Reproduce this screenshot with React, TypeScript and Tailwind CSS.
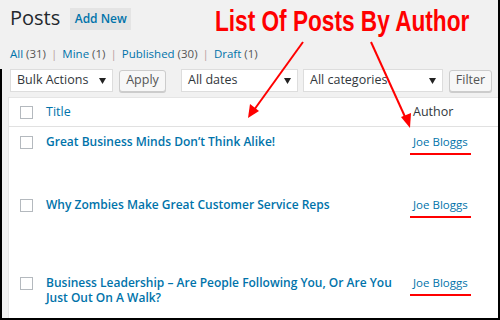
import React from 'react';

interface Post {
  id: number;
  title: string;
  author: string;
  rowHeight: string;
}

const posts: Post[] = [
  { id: 1, title: "Great Business Minds Don’t Think Alike!", author: 'Joe Bloggs', rowHeight: 'h-[63px]' },
  { id: 2, title: 'Why Zombies Make Great Customer Service Reps', author: 'Joe Bloggs', rowHeight: 'h-[78px]' },
  { id: 3, title: 'Business Leadership – Are People Following You, Or Are You Just Out On A Walk?', author: 'Joe Bloggs', rowHeight: 'h-[60px]' },
];

const Caret = () => (
  <svg width="7" height="6" viewBox="0 0 7 6" className="shrink-0">
    <path d="M0 0 L7 0 L3.5 6 Z" fill="#222" />
  </svg>
);

const Select = ({ label, width }: { label: string; width: string }) => (
  <div className={`${width} h-[23px] bg-white border border-[#ddd] flex items-center justify-between pl-[6px] pr-[6px] text-[12.5px] text-[#32373c]`}>
    <span>{label}</span>
    <Caret />
  </div>
);

const Button = ({ label, width }: { label: string; width: string }) => (
  <button className={`${width} h-[22px] bg-[#f7f7f7] border border-[#ccc] rounded-[3px] text-[12.5px] text-[#555] shadow-[0_1px_0_#ccc] flex items-center justify-center`}>
    {label}
  </button>
);

const Checkbox = () => (
  <div className="w-[13px] h-[13px] bg-white border border-[#b4b9be] shrink-0" />
);

const App: React.FC = () => {
  return (
    <div className="relative w-[500px] h-[320px] bg-[#f1f1f1] overflow-hidden border-r-2 border-b-2 border-black font-['Open_Sans',sans-serif]">
      {/* Header */}
      <div className="flex items-start pl-[10px] pt-[4px]">
        <h1 className="text-[20px] leading-[28px] text-[#23282d]">Posts</h1>
        <button className="ml-[10px] mt-[4px] h-[22px] w-[61px] bg-[#e4e4e4] text-[12px] font-semibold text-[#0073aa] flex items-center justify-center">
          Add New
        </button>
      </div>

      {/* Status links */}
      <div className="mt-[13px] pl-[10px] h-[18px] text-[11.5px] leading-[18px] text-[#555] flex items-center">
        <span className="text-[#0073aa]">All</span>&nbsp;(31)
        <span className="text-[#b9a0a0] mx-[5px]">|</span>
        <span className="text-[#0073aa]">Mine</span>&nbsp;(1)
        <span className="text-[#b9a0a0] mx-[5px]">|</span>
        <span className="text-[#0073aa]">Published</span>&nbsp;(30)
        <span className="text-[#b9a0a0] mx-[5px]">|</span>
        <span className="text-[#0073aa]">Draft</span>&nbsp;(1)
      </div>

      <div className="border-l-2 border-black mt-[6px]">
        {/* Filters */}
        <div className="flex items-center pl-[8px] h-[23px]">
          <Select label="Bulk Actions" width="w-[103px]" />
          <div className="ml-[6px]"><Button label="Apply" width="w-[47px]" /></div>
          <div className="ml-[15px]"><Select label="All dates" width="w-[117px]" /></div>
          <div className="ml-[5px]"><Select label="All categories" width="w-[140px]" /></div>
          <div className="ml-[6px]"><Button label="Filter" width="w-[43px]" /></div>
        </div>

        {/* Table */}
        <div className="ml-[6px] mt-[5px] bg-white border-t border-l border-[#e5e5e5]">
          <div className="flex items-center h-[29px] border-b border-[#e1e1e1]">
            <div className="w-[37px] pl-[11px]"><Checkbox /></div>
            <div className="w-[367px] text-[12.5px] text-[#0073aa]">Title</div>
            <div className="text-[12.5px] text-[#32373c]">Author</div>
          </div>
          {posts.map(post => (
            <div key={post.id} className={`flex items-start ${post.rowHeight}`}>
              <div className="w-[37px] pl-[11px] pt-[9px]"><Checkbox /></div>
              <div className="w-[367px] pt-[7px] pr-[12px] text-[12px] leading-[15px] font-semibold text-[#0073aa]">
                {post.title}
              </div>
              <div className="pt-[7px] text-[11.5px] leading-[15px] text-[#0073aa]">{post.author}</div>
            </div>
          ))}
        </div>
      </div>

      {/* Annotation overlay */}
      <div className="absolute left-[215px] top-[4px] text-[29px] leading-[34px] font-bold text-[#f00] font-['Liberation_Sans',sans-serif] origin-left scale-x-[0.78] whitespace-nowrap">
        List Of Posts By Author
      </div>
      <svg className="absolute inset-0 pointer-events-none" width="500" height="320" viewBox="0 0 500 320">
        <g stroke="#f00" strokeWidth="2" fill="#f00">
          <line x1="303" y1="42" x2="254" y2="110" />
          <path d="M248 118 L250 104 L259 111 Z" stroke="none" />
          <line x1="371" y1="42" x2="406" y2="119" />
          <path d="M410 128 L401 117 L411 113 Z" stroke="none" />
          <line x1="410" y1="154" x2="471" y2="154" />
          <line x1="410" y1="217" x2="471" y2="217" />
          <line x1="410" y1="295" x2="471" y2="295" />
        </g>
      </svg>
    </div>
  );
};

export default App;
